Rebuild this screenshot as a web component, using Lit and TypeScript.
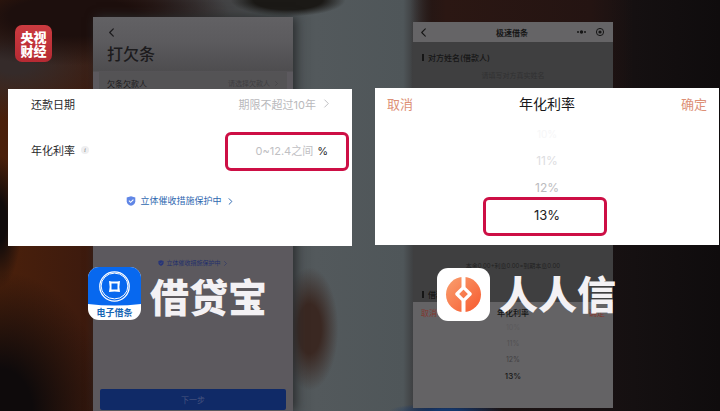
import { LitElement, html, css, svg } from "lit";
import { customElement, property } from "lit/decorators.js";
import { classMap } from "lit/directives/class-map.js";

const base = css`
  * { box-sizing: border-box; }
  :host {
    display: block;
    font-family: Inter, "Noto Sans CJK SC", sans-serif;
  }
  button, input {
    font: inherit;
    color: inherit;
    background: none;
    border: 0;
    padding: 0;
    margin: 0;
  }
  h1, h2, p, ul { margin: 0; padding: 0; font-size: inherit; font-weight: 400; list-style: none; }
  svg { display: block; flex: none; }
`;

const chevron = (dir: "left" | "right", size: number, width = 1) => html`
  <svg width=${size} height=${size} viewBox="0 0 10 10" fill="none" stroke="currentColor"
    stroke-width=${width} stroke-linecap="round" stroke-linejoin="round" aria-hidden="true">
    <path d=${dir === "left" ? "M7 1 3 5l4 4" : "M3 1l4 4-4 4"} />
  </svg>`;

const shield = (size: number, fill = "#6086e6", tick = "#fff") => html`
  <svg width=${size} height=${size} viewBox="0 0 10 10" aria-hidden="true">
    <path d="M5 .3 9.3 1.5v3.7C9.3 7.6 7.3 9.1 5 9.8 2.7 9.1 .7 7.6 .7 5.2V1.5z" fill=${fill} />
    <path d="M2.9 4.7 4.6 6.3 7.4 3.6" fill="none" stroke=${tick} stroke-width="1.1" />
  </svg>`;

/* Dimmed screen of the loan-note form */
@customElement("note-screen")
export class NoteScreen extends LitElement {
  static styles = [base, css`
    :host {
      display: flex;
      flex-direction: column;
      width: 100%;
      max-width: 200px;
      color: #1c1b1d;
      background: linear-gradient(#626164 0, #5c5b5e 24px, #4e4d4f 54px, #5c595e 55px);
      box-shadow: 3px 0 10px #2a2c2e;
    }
    .head { padding: 10px 14px 0; }
    .back { display: block; height: 10px; }
    h1 { font-size: 16px; line-height: 24px; margin-top: 5px; font-weight: 500; }
    .row {
      display: flex;
      justify-content: space-between;
      align-items: center;
      margin: 6px 6px 0;
      padding: 0 8px;
      height: 22px;
      font-size: 8px;
      background: #545355;
    }
    .row .value { display: flex; align-items: center; gap: 4px; font-size: 7px; color: #3e3d40; }
    .guard {
      display: flex;
      align-items: center;
      justify-content: center;
      gap: 2px;
      margin-top: 164px;
      height: 10px;
      font-size: 6px;
      line-height: 8px;
      color: #222f6b;
    }
    .next {
      display: block;
      margin: auto 7px 1px;
      height: 21px;
      border-radius: 2px;
      background: #102a67;
      color: #48557f;
      font-size: 8px;
    }
  `];
  render() {
    return html`
      <div class="head">
        <button class="back" aria-label="返回">${chevron("left", 9, 1.4)}</button>
        <h1>打欠条</h1>
      </div>
      <div class="row"><span>欠条欠款人</span><span class="value">请选择欠款人 ${chevron("right", 5)}</span></div>
      <div class="guard">${shield(6, "#26347a", "#5c595e")}立体催收措施保护中 ${chevron("right", 5)}</div>
      <button class="next">下一步</button>
    `;
  }
}

/* Dimmed screen of the quick loan mini program */
@customElement("quick-screen")
export class QuickScreen extends LitElement {
  static styles = [base, css`
    :host {
      display: flex;
      flex-direction: column;
      width: 100%;
      max-width: 200px;
      color: #161616;
      background: #3f3f40;
    }
    header {
      display: grid;
      grid-template-columns: 1fr auto 1fr;
      align-items: center;
      height: 20px;
      padding: 0 8px 0 6px;
      background: #656466;
    }
    h1 { font-size: 8px; font-weight: 700; }
    .back { justify-self: start; }
    .tools { justify-self: end; }
    .section {
      display: flex;
      align-items: center;
      gap: 4px;
      height: 14px;
      padding-left: 9px;
      font-size: 8px;
      font-weight: 500;
    }
    .section::before { content: ""; width: 2px; height: 7px; background: #161616; }
    .first { margin-top: 8px; }
    .hint { text-align: center; font-size: 7px; line-height: 10px; margin-top: 7px; color: #313132; }
    .sum { text-align: center; font-size: 6px; line-height: 10px; margin-top: 180px; color: #222; }
    .second { margin-top: 16px; }
    .sheet { flex: 1; background: #646365; margin-top: 1px; padding-top: 2px; }
    .bar { display: flex; justify-content: space-between; padding: 0 8px; height: 16px; align-items: center; font-size: 8px; }
    .bar button { color: #81382f; }
    .bar h2 { font-weight: 500; }
    li { text-align: center; height: 16px; line-height: 16px; font-size: 7px; }
    .r0 { color: #5b5a5c; }
    .r1 { color: #525153; }
    .r2 { color: #414042; }
    .r3 { color: #161616; font-size: 8px; font-weight: 500; }
  `];
  render() {
    return html`
      <header>
        <button class="back" aria-label="返回">${chevron("left", 9, 1.2)}</button>
        <h1>极速借条</h1>
        <svg class="tools" width="30" height="10" viewBox="0 0 30 10" fill="#161616" aria-hidden="true">
          <circle cx="3" cy="5" r="1" /><circle cx="6.5" cy="5" r="1.7" /><circle cx="10" cy="5" r="1" />
          <circle cx="25" cy="5" r="3.6" fill="none" stroke="#161616" /><circle cx="25" cy="5" r="1.6" />
        </svg>
      </header>
      <h2 class="section first">对方姓名(借款人)</h2>
      <p class="hint">请填写对方真实姓名</p>
      <p class="sum">本金0.00+利息0.00=到期本息0.00</p>
      <h2 class="section second">借款</h2>
      <div class="sheet">
        <div class="bar"><button>取消</button><h2>年化利率</h2><button>确定</button></div>
        <ul>${["10%", "11%", "12%", "13%"].map((t, i) => html`<li class="r${i}">${t}</li>`)}</ul>
      </div>
    `;
  }
}

/* Enlarged part of the form: date, rate and protection link */
@customElement("form-card")
export class FormCard extends LitElement {
  static styles = [base, css`
    :host { background: #fff; height: 157px; color: #29292b; font-size: 11px; }
    .row { display: flex; align-items: center; justify-content: space-between; padding-left: 23px; }
    .date { height: 29px; padding-right: 21px; }
    .date button { display: flex; align-items: center; gap: 6px; color: #b9b9bc; }
    .rate { margin-top: 14px; padding-right: 3px; }
    .name { display: flex; align-items: center; gap: 6px; padding-bottom: 4px; }
    .info {
      width: 8px; height: 8px; border-radius: 4px;
      background: #eeeef0; color: #8a8a8e;
      font: italic 7px/8px "Liberation Serif", serif;
      text-align: center;
    }
    .field {
      display: flex;
      align-items: center;
      justify-content: flex-end;
      gap: 4px;
      width: 124px;
      height: 39px;
      padding: 0 18px 2px 8px;
      border: 3px solid #cd0f45;
      border-radius: 6px;
    }
    input { flex: 1; min-width: 0; text-align: right; outline: 0; }
    input::placeholder { color: #c0c0c3; opacity: 1; }
    .guard {
      display: flex;
      align-items: center;
      width: max-content;
      margin: 23px auto 0;
      font-size: 9px;
      line-height: 14px;
      color: #2e68b0;
      text-decoration: none;
    }
    .guard .text { margin: 0 5px 0 4px; }
  `];
  render() {
    return html`
      <div class="row date">
        <span id="due">还款日期</span>
        <button aria-labelledby="due">期限不超过10年 ${chevron("right", 9)}</button>
      </div>
      <div class="row rate">
        <span class="name"><label for="rate">年化利率</label><span class="info">i</span></span>
        <span class="field"><input id="rate" placeholder="0~12.4之间" /><span>%</span></span>
      </div>
      <a class="guard" href="#guard">${shield(10)}<span class="text">立体催收措施保护中</span>${chevron("right", 7, 1.4)}</a>
    `;
  }
}

/* Enlarged rate picker */
@customElement("rate-card")
export class RateCard extends LitElement {
  @property({ type: Array }) rates = ["10%", "11%", "12%", "13%"];
  static styles = [base, css`
    :host { background: #fff; height: 157px; }
    header { display: flex; align-items: center; justify-content: space-between; height: 30px; padding: 0 12px; font-size: 13px; color: #dd9076; }
    h2 { font-size: 14px; color: #19191b; }
    .list { display: flex; flex-direction: column; align-items: center; padding-top: 2px; }
    .item { height: 27px; width: 124px; text-align: center; }
    .i0 { font-size: 10px; color: #f6f6f7; }
    .i1 { font-size: 12px; color: #dddddf; }
    .i2 { font-size: 12px; color: #bbbbbe; }
    .on { height: 39px; margin-right: 4px; margin-top: -4px; padding: 0 0 4px 4px; border: 3px solid #cd0f45; border-radius: 6px; font-size: 13px; color: #202022; }
  `];
  render() {
    const last = this.rates.length - 1;
    return html`
      <header><button>取消</button><h2>年化利率</h2><button>确定</button></header>
      <div class="list">
        ${this.rates.map((r, i) => html`<button class=${classMap({ item: true, ["i" + i]: true, on: i === last })}>${r}</button>`)}
      </div>
    `;
  }
}

const noteLogo = svg`
  <clipPath id="tile"><rect width="53" height="53" rx="11" /></clipPath>
  <g clip-path="url(#tile)">
    <rect width="53" height="53" fill="#fff" />
    <path d="M0 0h53v37Q26.5 40 0 37z" fill="#0768ef" />
  </g>
  <circle cx="26.5" cy="19.5" r="14.7" fill="none" stroke="#fff" stroke-width="1.3" />
  <ellipse cx="26.5" cy="19" rx="13.4" ry="12.9" fill="none" stroke="#fff" stroke-width="1" />
  <path d="M21 14q5.5 1.2 11 0q-1.2 5.5 0 11q-5.5-1.2-11 0q1.2-5.5 0-11z" fill="#fff" />
  <rect x="23.5" y="16.5" width="6" height="6" fill="#0768ef" />
  <text class="mark" x="26.5" y="49" text-anchor="middle">电子借条</text>`;

const trustLogo = svg`
  <defs><linearGradient id="warm" x1="0" y1="0" x2="1" y2="1">
    <stop offset="0" stop-color="#f9a070" /><stop offset="1" stop-color="#f7592e" />
  </linearGradient></defs>
  <rect width="53" height="53" rx="11" fill="#fff" />
  <circle cx="26.5" cy="26.5" r="17.5" fill="url(#warm)" />
  <path d="M26.5 8v11M26.5 33v12" stroke="#fff" stroke-width="4" />
  <path d="M26.5 19.3l6.7 6.7-6.7 6.7-6.7-6.7z" fill="none" stroke="#fff" stroke-width="3.2" stroke-linejoin="round" />`;

@customElement("app-root")
export class AppRoot extends LitElement {
  static styles = [base, css`
    .stage {
      position: relative;
      display: grid;
      grid-template-columns: 1fr 1fr;
      min-height: 100vh;
      overflow: hidden;
      background:
        radial-gradient(ellipse 8% 2% at 62% 100%, #14376c 20%, transparent),
        radial-gradient(ellipse 4% 15% at 43% 80%, #3a2822 40%, transparent),
        radial-gradient(ellipse 22% 12% at 10% 4%, #1d0f0d 40%, transparent),
        radial-gradient(ellipse 14% 14% at 2% 15%, #352b2a 20%, transparent),
        radial-gradient(ellipse 3% 16% at 0% 54%, #100b0b 30%, transparent),
        radial-gradient(ellipse 15% 34% at 0% 100%, #0e0a0b 30%, transparent),
        radial-gradient(ellipse 8% 4% at 40% 0%, #1b1916 60%, transparent),
        linear-gradient(90deg, transparent 57%, #2b1713 62%, #241412 82%, transparent 88%) top / 100% 22% no-repeat,
        linear-gradient(90deg, #4a200b 0, #3c1a0e 13%, #393334 24%, #4b5153 38%, #53595c 44%, #4f5659 56%, #1f1615 60%, #1a1213 80%, #151011 88%, #0f0c0d);
    }
    .column { position: relative; display: flex; justify-content: center; }
    .left { padding: 17px 0 0 26px; }
    .right { padding: 22px 54px 3px 0; }
    .over { position: absolute; }
    .left .over { top: 89px; left: 8px; right: 8px; }
    .right .over { top: 88px; left: 15px; right: 1px; }
    .brand { display: flex; align-items: center; gap: 9px; color: #f3f1f4; font-size: 39px; line-height: 45px; }
    .left .brand { align-items: flex-end; margin: 21px 0 0 80px; }
    .right .brand { margin: 23px 0 0 62px; }
    .brand h2 { font-weight: 900; }
    .mark { font: 700 9px "Noto Sans CJK SC", sans-serif; fill: #1766b4; }
    .badge {
      position: absolute;
      z-index: 1;
      top: 25px;
      left: 15px;
      width: 37px;
      height: 37px;
      padding-top: 5px;
      border-radius: 7px;
      background: linear-gradient(#cb3b40, #b62a33);
      color: #fff;
      font-size: 13px;
      line-height: 14px;
      font-weight: 900;
      text-align: center;
    }
  `];
  render() {
    return html`
      <main class="stage">
        <div class="badge">央视<br />财经</div>
        <section class="column left">
          <note-screen></note-screen>
          <div class="over">
            <form-card></form-card>
            <div class="brand">
              <svg width="53" height="53" viewBox="0 0 53 53" aria-hidden="true">${noteLogo}</svg>
              <h2>借贷宝</h2>
            </div>
          </div>
        </section>
        <section class="column right">
          <quick-screen></quick-screen>
          <div class="over">
            <rate-card></rate-card>
            <div class="brand">
              <svg width="53" height="53" viewBox="0 0 53 53" aria-hidden="true">${trustLogo}</svg>
              <h2>人人信</h2>
            </div>
          </div>
        </section>
      </main>
    `;
  }
}
